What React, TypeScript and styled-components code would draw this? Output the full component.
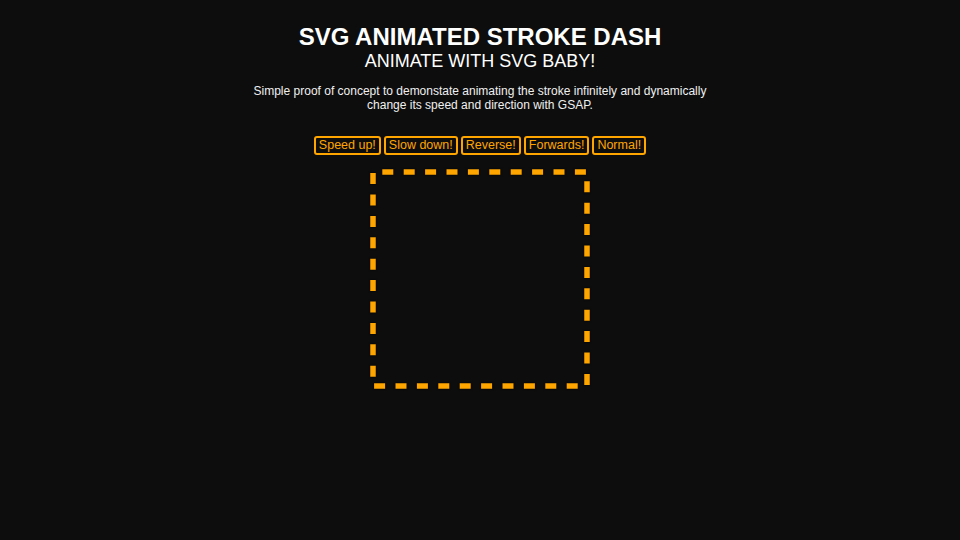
import React from "react";
import styled, { createGlobalStyle } from "styled-components";

const GlobalStyle = createGlobalStyle`
  html, body {
    margin: 0;
    padding: 0;
    background: #0d0d0d;
  }
  body {
    font-family: "Liberation Sans", Arial, Helvetica, sans-serif;
    color: #ffffff;
  }
`;

const controls = ["Speed up!", "Slow down!", "Reverse!", "Forwards!", "Normal!"];

const App = (): React.ReactElement => {
  return (
    <>
      <GlobalStyle />
      <Page>
        <Title>SVG ANIMATED STROKE DASH</Title>
        <SubTitle>ANIMATE WITH SVG BABY!</SubTitle>
        <Intro>
          Simple proof of concept to demonstate animating the stroke infinitely
          and dynamically change its speed and direction with GSAP.
        </Intro>
        <Controls>
          {controls.map((label) => (
            <ControlButton key={label}>{label}</ControlButton>
          ))}
        </Controls>
        <Stage width="220" height="220" viewBox="0 0 220 220">
          <DashRect x="3" y="3" width="214" height="214" />
        </Stage>
      </Page>
    </>
  );
};

export default App;

const Page = styled.div`
  display: flex;
  flex-direction: column;
  align-items: center;
  padding-top: 23px;
  min-height: 540px;
  box-sizing: border-box;
  text-align: center;
`;

const Title = styled.h1`
  margin: 0;
  font-size: 24px;
  font-weight: 700;
  line-height: 28px;
  color: #ffffff;
`;

const SubTitle = styled.h2`
  margin: 0;
  font-size: 18px;
  font-weight: 400;
  line-height: 21px;
  color: #ffffff;
`;

const Intro = styled.p`
  margin: 12px 0 0;
  max-width: 470px;
  font-size: 12px;
  line-height: 14px;
  color: #f0f0f0;
`;

const Controls = styled.div`
  display: flex;
  gap: 3px;
  margin-top: 24px;
`;

const ControlButton = styled.button`
  font-family: "Liberation Sans", Arial, Helvetica, sans-serif;
  font-size: 12.5px;
  line-height: 13px;
  color: #ffa500;
  background: transparent;
  border: 2px solid #ffa500;
  border-radius: 3px;
  padding: 1px 3px;
  height: 19px;
  cursor: pointer;
`;

const Stage = styled.svg`
  display: block;
  margin-top: 14px;
  overflow: visible;
`;

const DashRect = styled.rect`
  fill: none;
  stroke: #ffa500;
  stroke-width: 5.5;
  stroke-dasharray: 11 10.4;
  stroke-dashoffset: 12.1;
  filter: drop-shadow(0 0 1px rgba(0, 0, 0, 0.9));
`;
